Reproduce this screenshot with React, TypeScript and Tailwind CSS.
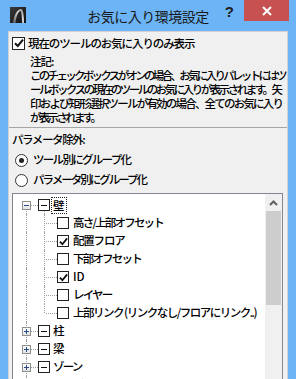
import type { ReactNode } from 'react';

const jp = "font-['Noto_Sans_CJK_JP','Noto_Sans_CJK_SC',sans-serif]";

function CheckMark({ size = 10 }: { size?: number }) {
  return (
    <svg width={size} height={size} viewBox="0 0 10 10">
      <path d="M1 5.2 L3.8 8 L9 1.6" fill="none" stroke="#111" strokeWidth="2" />
    </svg>
  );
}

function Box({ checked, dash, big }: { checked?: boolean; dash?: boolean; big?: boolean }) {
  return (
    <span
      className={`relative z-10 flex shrink-0 items-center justify-center border border-[#222] bg-white ${
        big ? 'h-[13px] w-[13px]' : 'h-[12px] w-[12px]'
      }`}
    >
      {checked && <CheckMark size={big ? 10 : 9} />}
      {dash && <span className="block h-[1px] w-[6px] bg-[#111]" />}
    </span>
  );
}

function Expander({ open }: { open: boolean }) {
  return (
    <span className="relative z-10 flex h-[9px] w-[9px] shrink-0 items-center justify-center border border-[#8e8f8f] bg-gradient-to-b from-white to-[#e4e4e4]">
      <span className="absolute h-[1px] w-[5px] bg-[#2b4a8b]" />
      {!open && <span className="absolute h-[5px] w-[1px] bg-[#2b4a8b]" />}
    </span>
  );
}

function Row({ children, lines }: { children: ReactNode; lines: ReactNode }) {
  return (
    <div className="relative flex h-[18px] items-center">
      {lines}
      {children}
    </div>
  );
}

const vFull = (left: string) => (
  <span className={`absolute top-0 bottom-0 border-l border-dotted border-[#a0a0a0] ${left}`} />
);

const children = [
  { label: '高さ/上部オフセット', checked: false, track: 'tracking-[-1.8px]' },
  { label: '配置フロア', checked: true, track: 'tracking-[-1.2px]' },
  { label: '下部オフセット', checked: false, track: 'tracking-[-1.8px]' },
  { label: 'ID', checked: true, track: 'tracking-normal' },
  { label: 'レイヤー', checked: false, track: 'tracking-[-1.8px]' },
  { label: '上部リンク (リンクなし/フロアにリンク..)', checked: false, track: 'tracking-[-1.5px]' },
];

const groups = ['柱', '梁', 'ゾーン', 'スラブ'];

function Radio({ on }: { on?: boolean }) {
  return (
    <span className="flex h-[13px] w-[13px] shrink-0 items-center justify-center rounded-full border border-[#333] bg-white">
      {on && <span className="h-[5px] w-[5px] rounded-full bg-[#222]" />}
    </span>
  );
}

export default function App() {
  return (
    <div className={`flex h-[379px] w-[296px] flex-col overflow-hidden bg-[#6cb4f5] text-[11.5px] font-medium text-black ${jp}`}>
      <div className="grid h-[31px] shrink-0 grid-cols-[1fr_auto_1fr]">
        <div className="flex items-start pl-[10px] pt-[7px]">
          <svg width="16" height="16" viewBox="0 0 16 16">
            <defs>
              <linearGradient id="lg" x1="0" y1="0" x2="1" y2="1">
                <stop offset="0" stopColor="#3a3a3a" />
                <stop offset="1" stopColor="#111" />
              </linearGradient>
              <linearGradient id="arc" x1="0" y1="1" x2="1" y2="0">
                <stop offset="0" stopColor="#555" />
                <stop offset="0.6" stopColor="#ddd" />
                <stop offset="1" stopColor="#888" />
              </linearGradient>
            </defs>
            <rect width="16" height="16" fill="url(#lg)" />
            <path d="M3 16 C4 7 8 2 11 2 C13 2 14 8 14 16 L12 16 C12 9 11.5 4 10.5 4 C8.5 4 6 9 5.5 16 Z" fill="url(#arc)" />
          </svg>
        </div>
        <div className="pt-[6px] text-[14px] font-normal leading-[20px] tracking-[-0.5px] text-[#1a1a1a]">お気に入り環境設定</div>
        <div className="flex items-start justify-end">
          <span className="mt-[4px] mr-[10px] font-['Liberation_Sans',sans-serif] text-[15px] font-bold leading-[16px] text-[#1c1c1c]">?</span>
          <span className="mr-[7px] flex h-[21px] w-[45px] items-center justify-center bg-[#c75050]">
            <svg width="10" height="10" viewBox="0 0 10 10">
              <path d="M1 1 L9 9 M9 1 L1 9" stroke="#fff" strokeWidth="2" />
            </svg>
          </span>
        </div>
      </div>

      <div className="mx-[8px] flex min-h-0 flex-1 flex-col border-x border-t border-[#d2d2d2] bg-[#f0f0f0]">
        <div className="border-b border-[#a6a6a6] pb-[3px]">
          <div className="flex h-[22px] items-center gap-[3px] pl-[3px]">
            <Box checked big />
            <span className="leading-[14px] tracking-[-1.1px] whitespace-nowrap">現在のツールのお気に入りのみ表示</span>
          </div>
          <div className="pl-[21px] leading-[14px] whitespace-nowrap">
            <div className="tracking-[-1px]">注記:</div>
            <div className="tracking-[-2.7px]">このチェックボックスがオンの場合、お気に入りパレットにはツ</div>
            <div className="tracking-[-2.5px]">ールボックスの現在のツールのお気に入りが表示されます。矢</div>
            <div className="tracking-[-1.8px]">印および矩形選択ツールが有効の場合、全てのお気に入り</div>
            <div className="tracking-[-2.7px]">が表示されます。</div>
          </div>
        </div>

        <div className="mt-[2px] flex h-[20px] items-center pl-[3px] tracking-[-1.4px]">パラメータ除外:</div>
        <div className="flex h-[20px] items-center gap-[5px] pl-[6px]">
          <Radio on />
          <span className="tracking-[-1.7px]">ツール別にグループ化</span>
        </div>
        <div className="flex h-[20px] items-center gap-[5px] pl-[6px]">
          <Radio />
          <span className="tracking-[-2px]">パラメータ別にグループ化</span>
        </div>

        <div className="mt-[3px] mr-[4px] ml-[3px] flex min-h-0 flex-1 border-x border-t border-[#828790] bg-white">
          <div className="min-w-0 flex-1 overflow-hidden pt-[2px] tracking-[-1.8px]">
            <Row
              lines={
                <>
                  <span className="absolute top-[13px] bottom-0 left-[13px] border-l border-dotted border-[#a0a0a0]" />
                  <span className="absolute top-[14px] bottom-0 left-[31px] border-l border-dotted border-[#a0a0a0]" />
                </>
              }
            >
              <span className="ml-[9px] shrink-0">
                <Expander open />
              </span>
              <span className="w-[7px] shrink-0 border-t border-dotted border-[#a0a0a0]" />
              <Box dash />
              <span className="ml-[1px] border border-dotted border-[#222] px-[1px] leading-[15px] tracking-normal">壁</span>
            </Row>
            {children.map((c, i) => (
              <Row
                key={c.label}
                lines={
                  <>
                    {vFull('left-[13px]')}
                    {i < children.length - 1 ? (
                      vFull('left-[31px]')
                    ) : (
                      <span className="absolute top-0 left-[31px] h-[9px] border-l border-dotted border-[#a0a0a0]" />
                    )}
                  </>
                }
              >
                <span className="ml-[33px] w-[11px] shrink-0 border-t border-dotted border-[#a0a0a0]" />
                <Box checked={c.checked} />
                <span className={`ml-[4px] whitespace-nowrap ${c.track}`}>{c.label}</span>
              </Row>
            ))}
            {groups.map((g) => (
              <Row key={g} lines={vFull('left-[13px]')}>
                <span className="ml-[9px] shrink-0">
                  <Expander open={false} />
                </span>
                <span className="w-[7px] shrink-0 border-t border-dotted border-[#a0a0a0]" />
                <Box dash />
                <span className="ml-[3px] whitespace-nowrap">{g}</span>
              </Row>
            ))}
          </div>
          <div className="flex w-[17px] shrink-0 flex-col bg-[#f0f0f0]">
            <div className="flex h-[17px] items-center justify-center">
              <svg width="9" height="6" viewBox="0 0 9 6">
                <path d="M1 5 L4.5 1.5 L8 5" fill="none" stroke="#606060" strokeWidth="2" />
              </svg>
            </div>
            <div className="mx-[1px] h-[94px] bg-[#cdcdcd]" />
          </div>
        </div>
      </div>
    </div>
  );
}
